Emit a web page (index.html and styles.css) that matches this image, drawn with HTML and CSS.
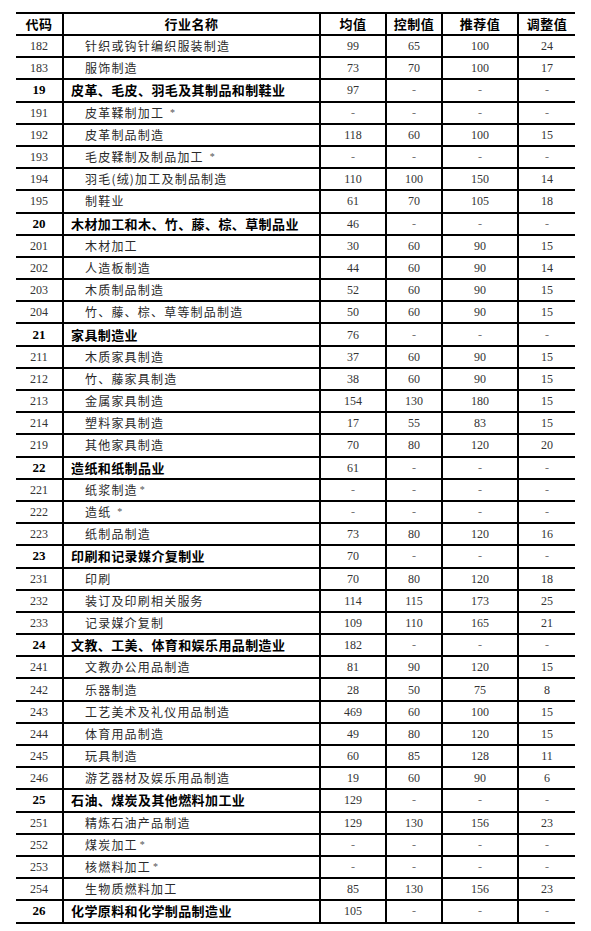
FILE: index.html
```html
<!DOCTYPE html>
<html lang="zh-CN">
<head>
<meta charset="utf-8">
<title>行业指标表</title>
<link rel="stylesheet" href="styles.css">
</head>
<body>
<table class="tbl">
  <colgroup>
    <col class="c-code"><col class="c-name"><col class="c-avg"><col class="c-ctl"><col class="c-rec"><col class="c-adj">
  </colgroup>
  <thead>
    <tr class="head"><th>代码</th><th>行业名称</th><th>均值</th><th>控制值</th><th>推荐值</th><th>调整值</th></tr>
  </thead>
  <tbody>
    <tr class="sub"><td>182</td><td>针织或钩针编织服装制造</td><td>99</td><td>65</td><td>100</td><td>24</td></tr>
    <tr class="sub"><td>183</td><td>服饰制造</td><td>73</td><td>70</td><td>100</td><td>17</td></tr>
    <tr class="cat"><td>19</td><td>皮革、毛皮、羽毛及其制品和制鞋业</td><td>97</td><td class="d">-</td><td class="d">-</td><td class="d">-</td></tr>
    <tr class="sub"><td>191</td><td>皮革鞣制加工 <span class="ast">*</span></td><td class="d">-</td><td class="d">-</td><td class="d">-</td><td class="d">-</td></tr>
    <tr class="sub"><td>192</td><td>皮革制品制造</td><td>118</td><td>60</td><td>100</td><td>15</td></tr>
    <tr class="sub"><td>193</td><td>毛皮鞣制及制品加工 <span class="ast">*</span></td><td class="d">-</td><td class="d">-</td><td class="d">-</td><td class="d">-</td></tr>
    <tr class="sub"><td>194</td><td>羽毛(绒)加工及制品制造</td><td>110</td><td>100</td><td>150</td><td>14</td></tr>
    <tr class="sub"><td>195</td><td>制鞋业</td><td>61</td><td>70</td><td>105</td><td>18</td></tr>
    <tr class="cat"><td>20</td><td>木材加工和木、竹、藤、棕、草制品业</td><td>46</td><td class="d">-</td><td class="d">-</td><td class="d">-</td></tr>
    <tr class="sub"><td>201</td><td>木材加工</td><td>30</td><td>60</td><td>90</td><td>15</td></tr>
    <tr class="sub"><td>202</td><td>人造板制造</td><td>44</td><td>60</td><td>90</td><td>14</td></tr>
    <tr class="sub"><td>203</td><td>木质制品制造</td><td>52</td><td>60</td><td>90</td><td>15</td></tr>
    <tr class="sub"><td>204</td><td>竹、藤、棕、草等制品制造</td><td>50</td><td>60</td><td>90</td><td>15</td></tr>
    <tr class="cat"><td>21</td><td>家具制造业</td><td>76</td><td class="d">-</td><td class="d">-</td><td class="d">-</td></tr>
    <tr class="sub"><td>211</td><td>木质家具制造</td><td>37</td><td>60</td><td>90</td><td>15</td></tr>
    <tr class="sub"><td>212</td><td>竹、藤家具制造</td><td>38</td><td>60</td><td>90</td><td>15</td></tr>
    <tr class="sub"><td>213</td><td>金属家具制造</td><td>154</td><td>130</td><td>180</td><td>15</td></tr>
    <tr class="sub"><td>214</td><td>塑料家具制造</td><td>17</td><td>55</td><td>83</td><td>15</td></tr>
    <tr class="sub"><td>219</td><td>其他家具制造</td><td>70</td><td>80</td><td>120</td><td>20</td></tr>
    <tr class="cat"><td>22</td><td>造纸和纸制品业</td><td>61</td><td class="d">-</td><td class="d">-</td><td class="d">-</td></tr>
    <tr class="sub"><td>221</td><td>纸浆制造<span class="ast">*</span></td><td class="d">-</td><td class="d">-</td><td class="d">-</td><td class="d">-</td></tr>
    <tr class="sub"><td>222</td><td>造纸 <span class="ast">*</span></td><td class="d">-</td><td class="d">-</td><td class="d">-</td><td class="d">-</td></tr>
    <tr class="sub"><td>223</td><td>纸制品制造</td><td>73</td><td>80</td><td>120</td><td>16</td></tr>
    <tr class="cat"><td>23</td><td>印刷和记录媒介复制业</td><td>70</td><td class="d">-</td><td class="d">-</td><td class="d">-</td></tr>
    <tr class="sub"><td>231</td><td>印刷</td><td>70</td><td>80</td><td>120</td><td>18</td></tr>
    <tr class="sub"><td>232</td><td>装订及印刷相关服务</td><td>114</td><td>115</td><td>173</td><td>25</td></tr>
    <tr class="sub"><td>233</td><td>记录媒介复制</td><td>109</td><td>110</td><td>165</td><td>21</td></tr>
    <tr class="cat"><td>24</td><td>文教、工美、体育和娱乐用品制造业</td><td>182</td><td class="d">-</td><td class="d">-</td><td class="d">-</td></tr>
    <tr class="sub"><td>241</td><td>文教办公用品制造</td><td>81</td><td>90</td><td>120</td><td>15</td></tr>
    <tr class="sub"><td>242</td><td>乐器制造</td><td>28</td><td>50</td><td>75</td><td>8</td></tr>
    <tr class="sub"><td>243</td><td>工艺美术及礼仪用品制造</td><td>469</td><td>60</td><td>100</td><td>15</td></tr>
    <tr class="sub"><td>244</td><td>体育用品制造</td><td>49</td><td>80</td><td>120</td><td>15</td></tr>
    <tr class="sub"><td>245</td><td>玩具制造</td><td>60</td><td>85</td><td>128</td><td>11</td></tr>
    <tr class="sub"><td>246</td><td>游艺器材及娱乐用品制造</td><td>19</td><td>60</td><td>90</td><td>6</td></tr>
    <tr class="cat"><td>25</td><td>石油、煤炭及其他燃料加工业</td><td>129</td><td class="d">-</td><td class="d">-</td><td class="d">-</td></tr>
    <tr class="sub"><td>251</td><td>精炼石油产品制造</td><td>129</td><td>130</td><td>156</td><td>23</td></tr>
    <tr class="sub"><td>252</td><td>煤炭加工<span class="ast">*</span></td><td class="d">-</td><td class="d">-</td><td class="d">-</td><td class="d">-</td></tr>
    <tr class="sub"><td>253</td><td>核燃料加工<span class="ast">*</span></td><td class="d">-</td><td class="d">-</td><td class="d">-</td><td class="d">-</td></tr>
    <tr class="sub"><td>254</td><td>生物质燃料加工</td><td>85</td><td>130</td><td>156</td><td>23</td></tr>
    <tr class="cat"><td>26</td><td>化学原料和化学制品制造业</td><td>105</td><td class="d">-</td><td class="d">-</td><td class="d">-</td></tr>
  </tbody>
</table>
</body>
</html>
```

FILE: styles.css
```css
html, body {
  margin: 0;
  padding: 0;
  background: #fff;
}

body {
  padding: 12px 0 0 16px;
  font-family: "Liberation Serif", "Noto Sans CJK SC", serif;
  color: #333;
}

.tbl {
  border-collapse: collapse;
  table-layout: fixed;
  width: 559px;
  border-top: 2px solid #000;
  border-bottom: 2px solid #000;
}

.c-code { width: 47px; }
.c-name { width: 257px; }
.c-avg { width: 66px; }
.c-ctl { width: 56px; }
.c-rec { width: 76px; }
.c-adj { width: 57px; }

.tbl th,
.tbl td {
  padding: 0;
  text-align: center;
  vertical-align: middle;
  border: 2px solid #000;
  overflow: hidden;
  white-space: nowrap;
  line-height: 14px;
}

.tbl th:first-child,
.tbl td:first-child {
  border-left: none;
}

.tbl th:last-child,
.tbl td:last-child {
  border-right: none;
}

.head th {
  height: 20px;
  font-family: "Noto Sans CJK SC", sans-serif;
  font-weight: 700;
  font-size: 13px;
  color: #000;
  letter-spacing: 0.5px;
}

.tbl tbody tr {
  height: 22.2px;
}

.tbl td {
  font-size: 12px;
}

.tbl td:nth-child(2) {
  text-align: left;
  font-family: "Noto Sans CJK SC", sans-serif;
}

.sub td {
  color: #333;
}

.sub td:nth-child(2) {
  padding-left: 21px;
  font-size: 12px;
  letter-spacing: 1.2px;
  font-weight: 400;
  color: #2a2a2a;
}

.cat td {
  color: #000;
}

.cat td:first-child {
  font-weight: 700;
  font-size: 13px;
}

.cat td:nth-child(2) {
  padding-left: 7px;
  font-size: 13px;
  font-weight: 700;
  letter-spacing: 0.4px;
}

.cat td:nth-child(3) {
  color: #333;
}

.tbl td.d {
  color: #777;
}

.ast {
  font-family: "Liberation Serif", serif;
  font-size: 10px;
  vertical-align: 2px;
  color: #555;
  letter-spacing: 0;
  margin-left: 2px;
}
```
